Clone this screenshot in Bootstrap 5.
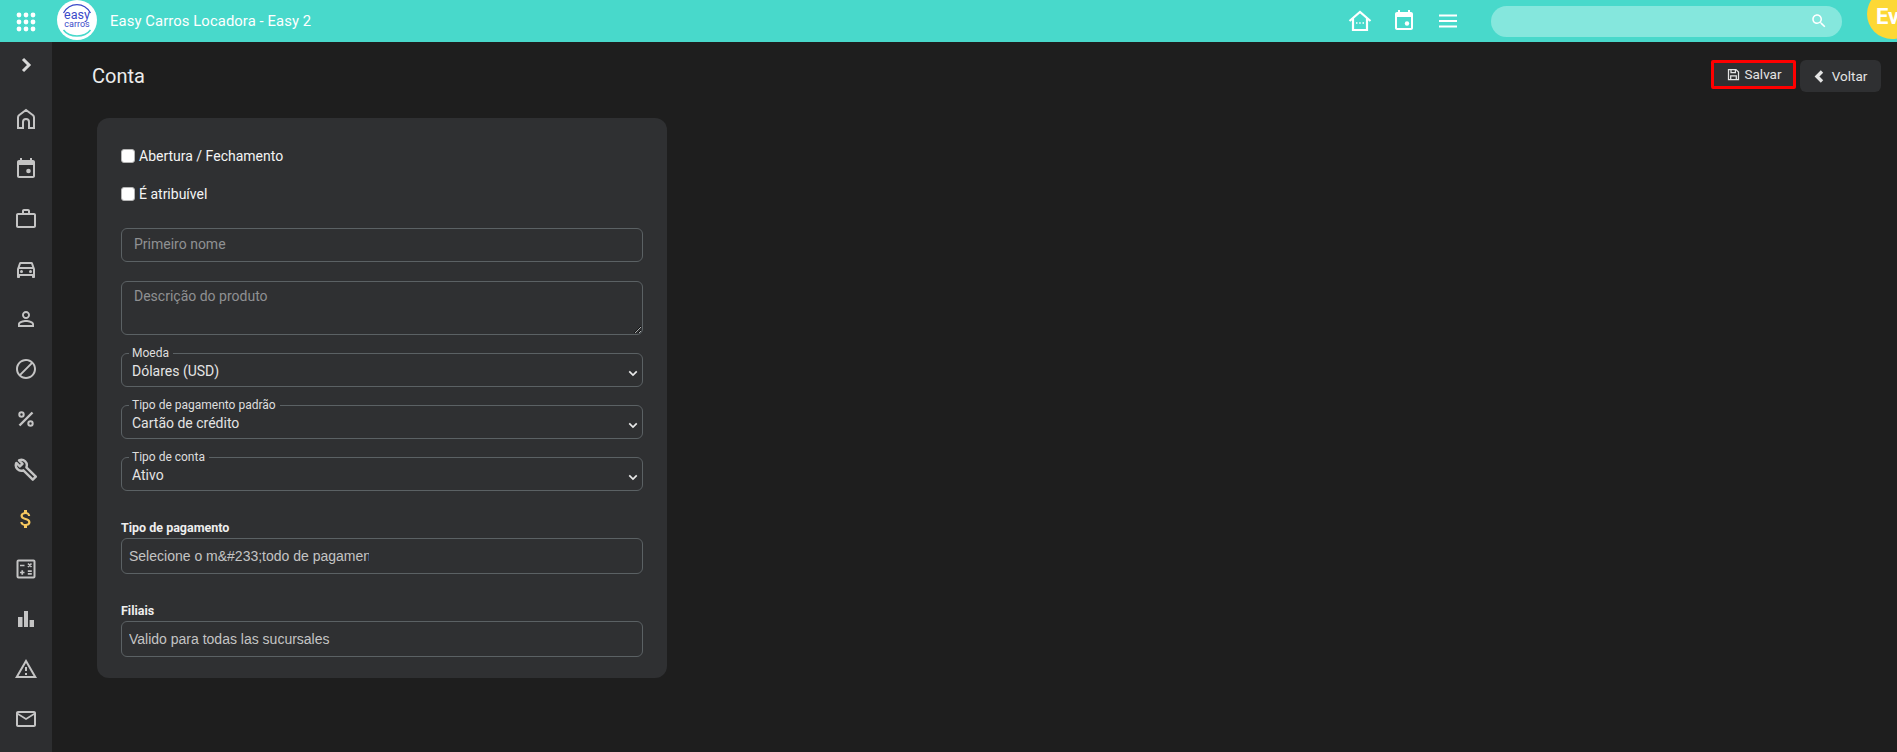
<!DOCTYPE html>
<html lang="pt">
<head>
  <meta charset="UTF-8" />
  <title>Conta - Easy Carros Locadora</title>
  <meta name="viewport" content="width=device-width, initial-scale=1" />
  <link href="https://cdn.jsdelivr.net/npm/bootstrap@5.3.2/dist/css/bootstrap.min.css" rel="stylesheet" />
  <style>
    html, body {
      height: 100%;
      overflow: hidden;
    }
    body {
      background: #1e1e1e;
      color: #f1f1f1;
      font-family: Roboto, "Liberation Sans", sans-serif;
      font-size: 14px;
    }
    .top-bar {
      height: 42px;
      background: #48d9cb;
      overflow: hidden;
    }
    .apps-btn {
      width: 20px;
      margin-left: 16px;
      margin-right: 21px;
    }
    .brand-logo {
      width: 40px;
      height: 40px;
      margin-top: -3px;
      margin-right: 13px;
      flex-shrink: 0;
    }
    .brand-name {
      color: #fff;
      font-size: 14.8px;
      letter-spacing: .1px;
    }
    .top-icons {
      gap: 20px;
      margin-right: 31px;
    }
    .top-search {
      width: 351px;
      height: 31px;
      border-radius: 16px;
      background: #85e7dd;
      padding-right: 14px;
      margin-right: 25px;
    }
    .avatar-circle {
      width: 50px;
      height: 50px;
      margin-top: -15px;
      margin-right: -20px;
      padding-left: 9px;
      padding-top: 11px;
      border-radius: 50%;
      background: #fdd835;
      color: #fff;
      font-size: 22px;
      font-weight: 700;
      flex-shrink: 0;
    }
    .page-body {
      height: 710px;
    }
    .side-bar {
      width: 52px;
      background: #2d2e30;
      flex-shrink: 0;
      padding-top: 11px;
    }
    .side-item {
      height: 50px;
      color: #c4c4c4;
    }
    .side-toggle {
      height: 24px;
      margin-bottom: 17px;
      color: #d8d8d8;
    }
    .side-item.is-active {
      color: #f6c85f;
    }
    .content-area {
      min-width: 0;
      padding: 18px 16px 0 45px;
    }
    .page-head {
      height: 32px;
      margin-bottom: 26px;
    }
    .page-title {
      margin: 1px 0 0 -5px;
      font-size: 20px;
      font-weight: 400;
      color: #ececec;
      line-height: 30px;
    }
    .head-btn {
      height: 32px;
      padding: 0;
      border: 0;
      border-radius: 6px;
      background: #2f3032;
      color: #e4e4e4;
      font-size: 13.5px;
    }
    .head-btn:hover {
      background: #2f3032;
      color: #e4e4e4;
    }
    .save-btn {
      width: 85px;
      height: 29px;
      border: 3px solid #f00;
      border-radius: 2px;
      margin-right: 4px;
    }
    .back-btn {
      width: 81px;
    }
    .form-panel {
      width: 570px;
      background: #2f3032;
      border-radius: 12px;
      padding: 28px 24px 21px;
    }
    .check-row {
      height: 20px;
      margin-bottom: 18px;
      font-size: 14px;
      color: #f4f4f4;
    }
    .check-row input {
      appearance: none;
      width: 14px;
      height: 14px;
      margin: 0 4px 0 0;
      background: #fff;
      border: 1px solid #b5b5b5;
      border-radius: 3px;
    }
    .panel-input {
      height: 34px;
      background: transparent;
      border: 1px solid #5b6164;
      border-radius: 6px;
      color: #ddd;
      font-size: 14px;
      padding: 0 12px 2px;
    }
    .panel-input::placeholder {
      color: #8f9193;
    }
    .panel-input:focus {
      background: transparent;
      color: #ddd;
    }
    .name-input {
      margin-top: 24px;
      margin-bottom: 19px;
    }
    textarea.panel-input {
      height: 54px;
      min-height: 54px;
      padding-top: 4px;
      margin-bottom: 11px;
    }
    .select-box {
      border: 1px solid #5b6164;
      border-radius: 6px;
      padding: 0;
      margin-bottom: 11px;
      min-width: 0;
    }
    .select-box legend {
      float: none;
      width: auto;
      margin: 0 0 0 7px;
      padding: 0 4px 0 3px;
      font-size: 12px;
      line-height: 14px;
      color: #dedede;
    }
    .select-box .form-select {
      height: 26px;
      padding: 0 28px 4px 10px;
      border: 0;
      background-color: transparent;
      background-image: url("data:image/svg+xml,%3csvg xmlns='http://www.w3.org/2000/svg' viewBox='0 0 12 8'%3e%3cpath fill='none' stroke='%23e8e8e8' stroke-width='2' d='M1.5 1.5 6 6l4.5-4.5'/%3e%3c/svg%3e");
      background-position: right 4px center;
      background-size: 10px 7px;
      color: #e4e4e4;
      font-size: 14px;
    }
    .field-title {
      font-size: 12.5px;
      font-weight: 700;
      line-height: 16px;
      color: #eee;
      margin: 29px 0 2px;
    }
    .picker-box {
      height: 36px;
      border: 1px solid #5b6164;
      border-radius: 6px;
      padding: 0 7px;
      font-family: "Liberation Sans", Arial, sans-serif;
      font-size: 14px;
      color: #c4c4c4;
    }
    .picker-text {
      width: 240px;
      overflow: hidden;
      white-space: nowrap;
    }
  </style>
</head>
<body>

<!-- Barra superior -->
<header class="top-bar d-flex align-items-center">
  <div class="apps-btn">
    <svg width="20" height="20" viewBox="0 0 20 20" fill="#fff">
      <circle cx="3" cy="3" r="2.4"/><circle cx="10" cy="3" r="2.4"/><circle cx="17" cy="3" r="2.4"/>
      <circle cx="3" cy="10" r="2.4"/><circle cx="10" cy="10" r="2.4"/><circle cx="17" cy="10" r="2.4"/>
      <circle cx="3" cy="17" r="2.4"/><circle cx="10" cy="17" r="2.4"/><circle cx="17" cy="17" r="2.4"/>
    </svg>
  </div>
  <svg class="brand-logo" viewBox="0 0 40 40">
    <circle cx="20" cy="20" r="20" fill="#fff"/>
    <path d="M6.500 13C10 7 15 4.700 20 4.700S30 7 33.500 13" fill="none" stroke="#3a49c9" stroke-width="1.300"/>
    <path d="M6.500 30c3 4 8 6 13.500 6s10.500-2 13.500-6" fill="none" stroke="#48d9cb" stroke-width="1.500"/>
    <text x="20" y="19" text-anchor="middle" font-family="Roboto, sans-serif" font-size="12.500" fill="#3a49c9">easy</text>
    <text x="20" y="27" text-anchor="middle" font-family="Roboto, sans-serif" font-size="9" fill="#3a49c9">carros</text>
  </svg>
  <span class="brand-name">Easy Carros Locadora - Easy 2</span>

  <div class="top-icons d-flex align-items-center ms-auto">
    <svg width="24" height="24" viewBox="0 0 24 24" fill="none" stroke="#fff" stroke-width="2.200">
      <path d="M1.500 12 12 3l10.500 9M5 9.500V21h14V9.500"/>
      <path d="M8 14h1.500M11.200 14h1.500M14.500 14h1.500" stroke-width="1.500"/>
    </svg>
    <svg width="24" height="24" viewBox="0 0 24 24" fill="#fff">
      <path d="M16 1v2H8V1H6v2H5c-1.110 0-1.990.9-1.990 2L3 19c0 1.100.89 2 2 2h14c1.100 0 2-.9 2-2V5c0-1.100-.9-2-2-2h-1V1h-2zm3 18H5V8h14v11z"/>
      <circle cx="15" cy="14.500" r="2.200"/>
    </svg>
    <svg width="24" height="24" viewBox="0 0 24 24" fill="#fff">
      <path d="M3 18.500h18v-2H3v2zm0-5.500h18v-2H3v2zm0-7.500v2h18v-2H3z"/>
    </svg>
  </div>

  <div class="top-search d-flex align-items-center justify-content-end">
    <svg width="18" height="18" viewBox="0 0 24 24" fill="#fff">
      <path d="M15.500 14h-.79l-.28-.27C15.410 12.590 16 11.110 16 9.500 16 5.910 13.090 3 9.500 3S3 5.910 3 9.500 5.910 16 9.500 16c1.610 0 3.090-.59 4.230-1.570l.27.28v.79l5 4.990L20.490 19l-4.990-5zm-6 0C7.010 14 5 11.990 5 9.500S7.010 5 9.500 5 14 7.010 14 9.500 11.990 14 9.500 14z"/>
    </svg>
  </div>
  <div class="avatar-circle">Ev</div>
</header>

<div class="page-body d-flex">
  <!-- Menu lateral -->
  <aside class="side-bar">
    <div class="side-toggle d-flex justify-content-center align-items-center">
      <svg width="24" height="24" viewBox="0 0 24 24" fill="none" stroke="currentColor" stroke-width="3"><path d="M9 6l6 6-6 6"/></svg>
    </div>
    <div class="side-item d-flex justify-content-center align-items-center">
      <svg width="24" height="24" viewBox="0 0 24 24" fill="none" stroke="currentColor" stroke-width="2"><path d="M4 21V10.500c0-1 .4-1.700 1-2.200L12 3l7 5.300c.6.500 1 1.200 1 2.200V21h-5v-6a3 3 0 0 0-6 0v6z"/></svg>
    </div>
    <div class="side-item d-flex justify-content-center align-items-center">
      <svg width="24" height="24" viewBox="0 0 24 24" fill="currentColor"><path d="M16 1v2H8V1H6v2H5c-1.110 0-1.990.9-1.990 2L3 19c0 1.100.89 2 2 2h14c1.100 0 2-.9 2-2V5c0-1.100-.9-2-2-2h-1V1h-2zm3 18H5V8h14v11z"/><circle cx="14.500" cy="14" r="2.300"/></svg>
    </div>
    <div class="side-item d-flex justify-content-center align-items-center">
      <svg width="24" height="24" viewBox="0 0 24 24" fill="currentColor"><path d="M14 6V4h-4v2h4zM4 8v11h16V8H4zm16-2c1.110 0 2 .89 2 2v11c0 1.110-.89 2-2 2H4c-1.110 0-2-.89-2-2l.01-11c0-1.110.88-2 1.990-2h4V4c0-1.110.89-2 2-2h4c1.110 0 2 .89 2 2v2h4z"/></svg>
    </div>
    <div class="side-item d-flex justify-content-center align-items-center">
      <svg width="24" height="24" viewBox="0 0 24 24" fill="currentColor"><path d="M18.920 6.010C18.720 5.420 18.160 5 17.500 5h-11c-.66 0-1.210.42-1.420 1.010L3 12v8c0 .55.45 1 1 1h1c.55 0 1-.45 1-1v-1h12v1c0 .55.45 1 1 1h1c.55 0 1-.45 1-1v-8l-2.080-5.990zM6.850 7h10.290l1.080 3.110H5.770L6.850 7zM19 17H5v-5h14v5z"/><circle cx="7.500" cy="14.500" r="1.500"/><circle cx="16.500" cy="14.500" r="1.500"/></svg>
    </div>
    <div class="side-item d-flex justify-content-center align-items-center">
      <svg width="24" height="24" viewBox="0 0 24 24" fill="currentColor"><path d="M12 5.900c1.160 0 2.100.94 2.100 2.100s-.94 2.100-2.100 2.100S9.900 9.160 9.900 8s.94-2.100 2.100-2.100m0 9c2.970 0 6.100 1.460 6.100 2.100v1.100H5.900V17c0-.64 3.130-2.100 6.100-2.100M12 4C9.790 4 8 5.790 8 8s1.790 4 4 4 4-1.790 4-4-1.790-4-4-4zm0 9c-2.670 0-8 1.340-8 4v3h16v-3c0-2.660-5.330-4-8-4z"/></svg>
    </div>
    <div class="side-item d-flex justify-content-center align-items-center">
      <svg width="24" height="24" viewBox="0 0 24 24" fill="currentColor"><path d="M12 2C6.480 2 2 6.480 2 12s4.480 10 10 10 10-4.480 10-10S17.520 2 12 2zM4 12c0-4.420 3.580-8 8-8 1.850 0 3.550.63 4.900 1.690L5.690 16.900C4.630 15.550 4 13.850 4 12zm8 8c-1.850 0-3.550-.63-4.900-1.690L18.310 7.100C19.370 8.450 20 10.150 20 12c0 4.420-3.580 8-8 8z"/></svg>
    </div>
    <div class="side-item d-flex justify-content-center align-items-center">
      <svg width="24" height="24" viewBox="0 0 24 24" fill="none" stroke="currentColor" stroke-width="2"><circle cx="7.500" cy="7.500" r="2.200"/><circle cx="16.500" cy="16.500" r="2.200"/><path d="M18.500 5.500l-13 13" stroke-width="2.400"/></svg>
    </div>
    <div class="side-item d-flex justify-content-center align-items-center">
      <svg width="24" height="24" viewBox="0 0 24 24" fill="none" stroke="currentColor" stroke-width="2.400" stroke-linejoin="round"><path d="M21.800 19.700l-9.400-9.400c.8-2 .4-4.300-1.200-5.900-1.700-1.700-4.200-2-6.200-1.100l3.500 3.500-2.600 2.600-3.500-3.500c-1 2-.6 4.500 1.100 6.200 1.600 1.600 3.900 2 5.900 1.200l9.400 9.400z"/></svg>
    </div>
    <div class="side-item is-active d-flex justify-content-center align-items-center">
      <svg width="24" height="24" viewBox="0 0 24 24" fill="currentColor"><path d="M11.800 10.900c-2.270-.59-3-1.200-3-2.150 0-1.090 1.010-1.850 2.700-1.850 1.780 0 2.440.85 2.500 2.100h2.210c-.07-1.720-1.120-3.300-3.210-3.810V3h-3v2.160c-1.940.42-3.500 1.680-3.500 3.610 0 2.310 1.910 3.460 4.700 4.130 2.500.6 3 1.480 3 2.410 0 .69-.49 1.790-2.700 1.790-2.060 0-2.870-.92-2.980-2.100h-2.200c.12 2.190 1.760 3.420 3.680 3.830V21h3v-2.150c1.950-.37 3.500-1.500 3.500-3.550 0-2.840-2.430-3.810-4.700-4.400z"/></svg>
    </div>
    <div class="side-item d-flex justify-content-center align-items-center">
      <svg width="24" height="24" viewBox="0 0 24 24" fill="none" stroke="currentColor"><rect x="3.500" y="3.500" width="17" height="17" rx="1" stroke-width="2"/><path d="M6 8.500h4.500M14 6.500l3.500 3.500M17.500 6.500 14 10M6 15.500h4.500M8.250 13.200v4.600M13.800 14.200h4M13.800 16.800h4" stroke-width="1.700"/></svg>
    </div>
    <div class="side-item d-flex justify-content-center align-items-center">
      <svg width="24" height="24" viewBox="0 0 24 24" fill="currentColor"><path d="M4 10h4.500v10H4zM10 4h4v16h-4zM15.600 13H20v7h-4.400z"/></svg>
    </div>
    <div class="side-item d-flex justify-content-center align-items-center">
      <svg width="24" height="24" viewBox="0 0 24 24" fill="currentColor"><path d="M12 5.990L19.530 19H4.470L12 5.990M12 2L1 21h22L12 2zm1 14h-2v2h2v-2zm0-6h-2v4h2v-4z"/></svg>
    </div>
    <div class="side-item d-flex justify-content-center align-items-center">
      <svg width="24" height="24" viewBox="0 0 24 24" fill="currentColor"><path d="M22 6c0-1.100-.9-2-2-2H4c-1.100 0-2 .9-2 2v12c0 1.100.9 2 2 2h16c1.100 0 2-.9 2-2V6zm-2 0l-8 5-8-5h16zm0 12H4V8l8 5 8-5v10z"/></svg>
    </div>
  </aside>

  <main class="content-area flex-grow-1">
    <div class="page-head d-flex align-items-start justify-content-between">
      <h1 class="page-title">Conta</h1>
      <div class="d-flex align-items-start">
        <button type="button" class="btn head-btn save-btn d-flex align-items-center justify-content-center gap-1">
          <svg width="15" height="15" viewBox="0 0 24 24" fill="none" stroke="currentColor" stroke-width="2"><path d="M4 4h12l4 4v12H4z"/><path d="M8 4v5h7V4M7.500 20v-6h9v6"/></svg>
          Salvar
        </button>
        <button type="button" class="btn head-btn back-btn d-flex align-items-center justify-content-center gap-2">
          <svg width="10" height="13" viewBox="0 0 10 13" fill="none" stroke="currentColor" stroke-width="3.400"><path d="M8 1.500 3 6.500l5 5"/></svg>
          Voltar
        </button>
      </div>
    </div>

    <form class="form-panel">
      <label class="check-row d-flex align-items-center"><input type="checkbox" /> Abertura / Fechamento</label>
      <label class="check-row d-flex align-items-center"><input type="checkbox" /> É atribuível</label>

      <input type="text" class="form-control panel-input name-input" placeholder="Primeiro nome" />
      <textarea class="form-control panel-input" placeholder="Descrição do produto"></textarea>

      <fieldset class="select-box">
        <legend>Moeda</legend>
        <select class="form-select"><option>Dólares (USD)</option></select>
      </fieldset>
      <fieldset class="select-box">
        <legend>Tipo de pagamento padrão</legend>
        <select class="form-select"><option>Cartão de crédito</option></select>
      </fieldset>
      <fieldset class="select-box">
        <legend>Tipo de conta</legend>
        <select class="form-select"><option>Ativo</option></select>
      </fieldset>

      <div class="field-title">Tipo de pagamento</div>
      <div class="picker-box d-flex align-items-center">
        <div class="picker-text">Selecione o m&amp;#233;todo de pagamento</div>
      </div>

      <div class="field-title">Filiais</div>
      <div class="picker-box d-flex align-items-center">
        <div class="picker-text">Valido para todas las sucursales</div>
      </div>
    </form>
  </main>
</div>

<script src="https://cdn.jsdelivr.net/npm/bootstrap@5.3.2/dist/js/bootstrap.bundle.min.js"></script>
</body>
</html>
